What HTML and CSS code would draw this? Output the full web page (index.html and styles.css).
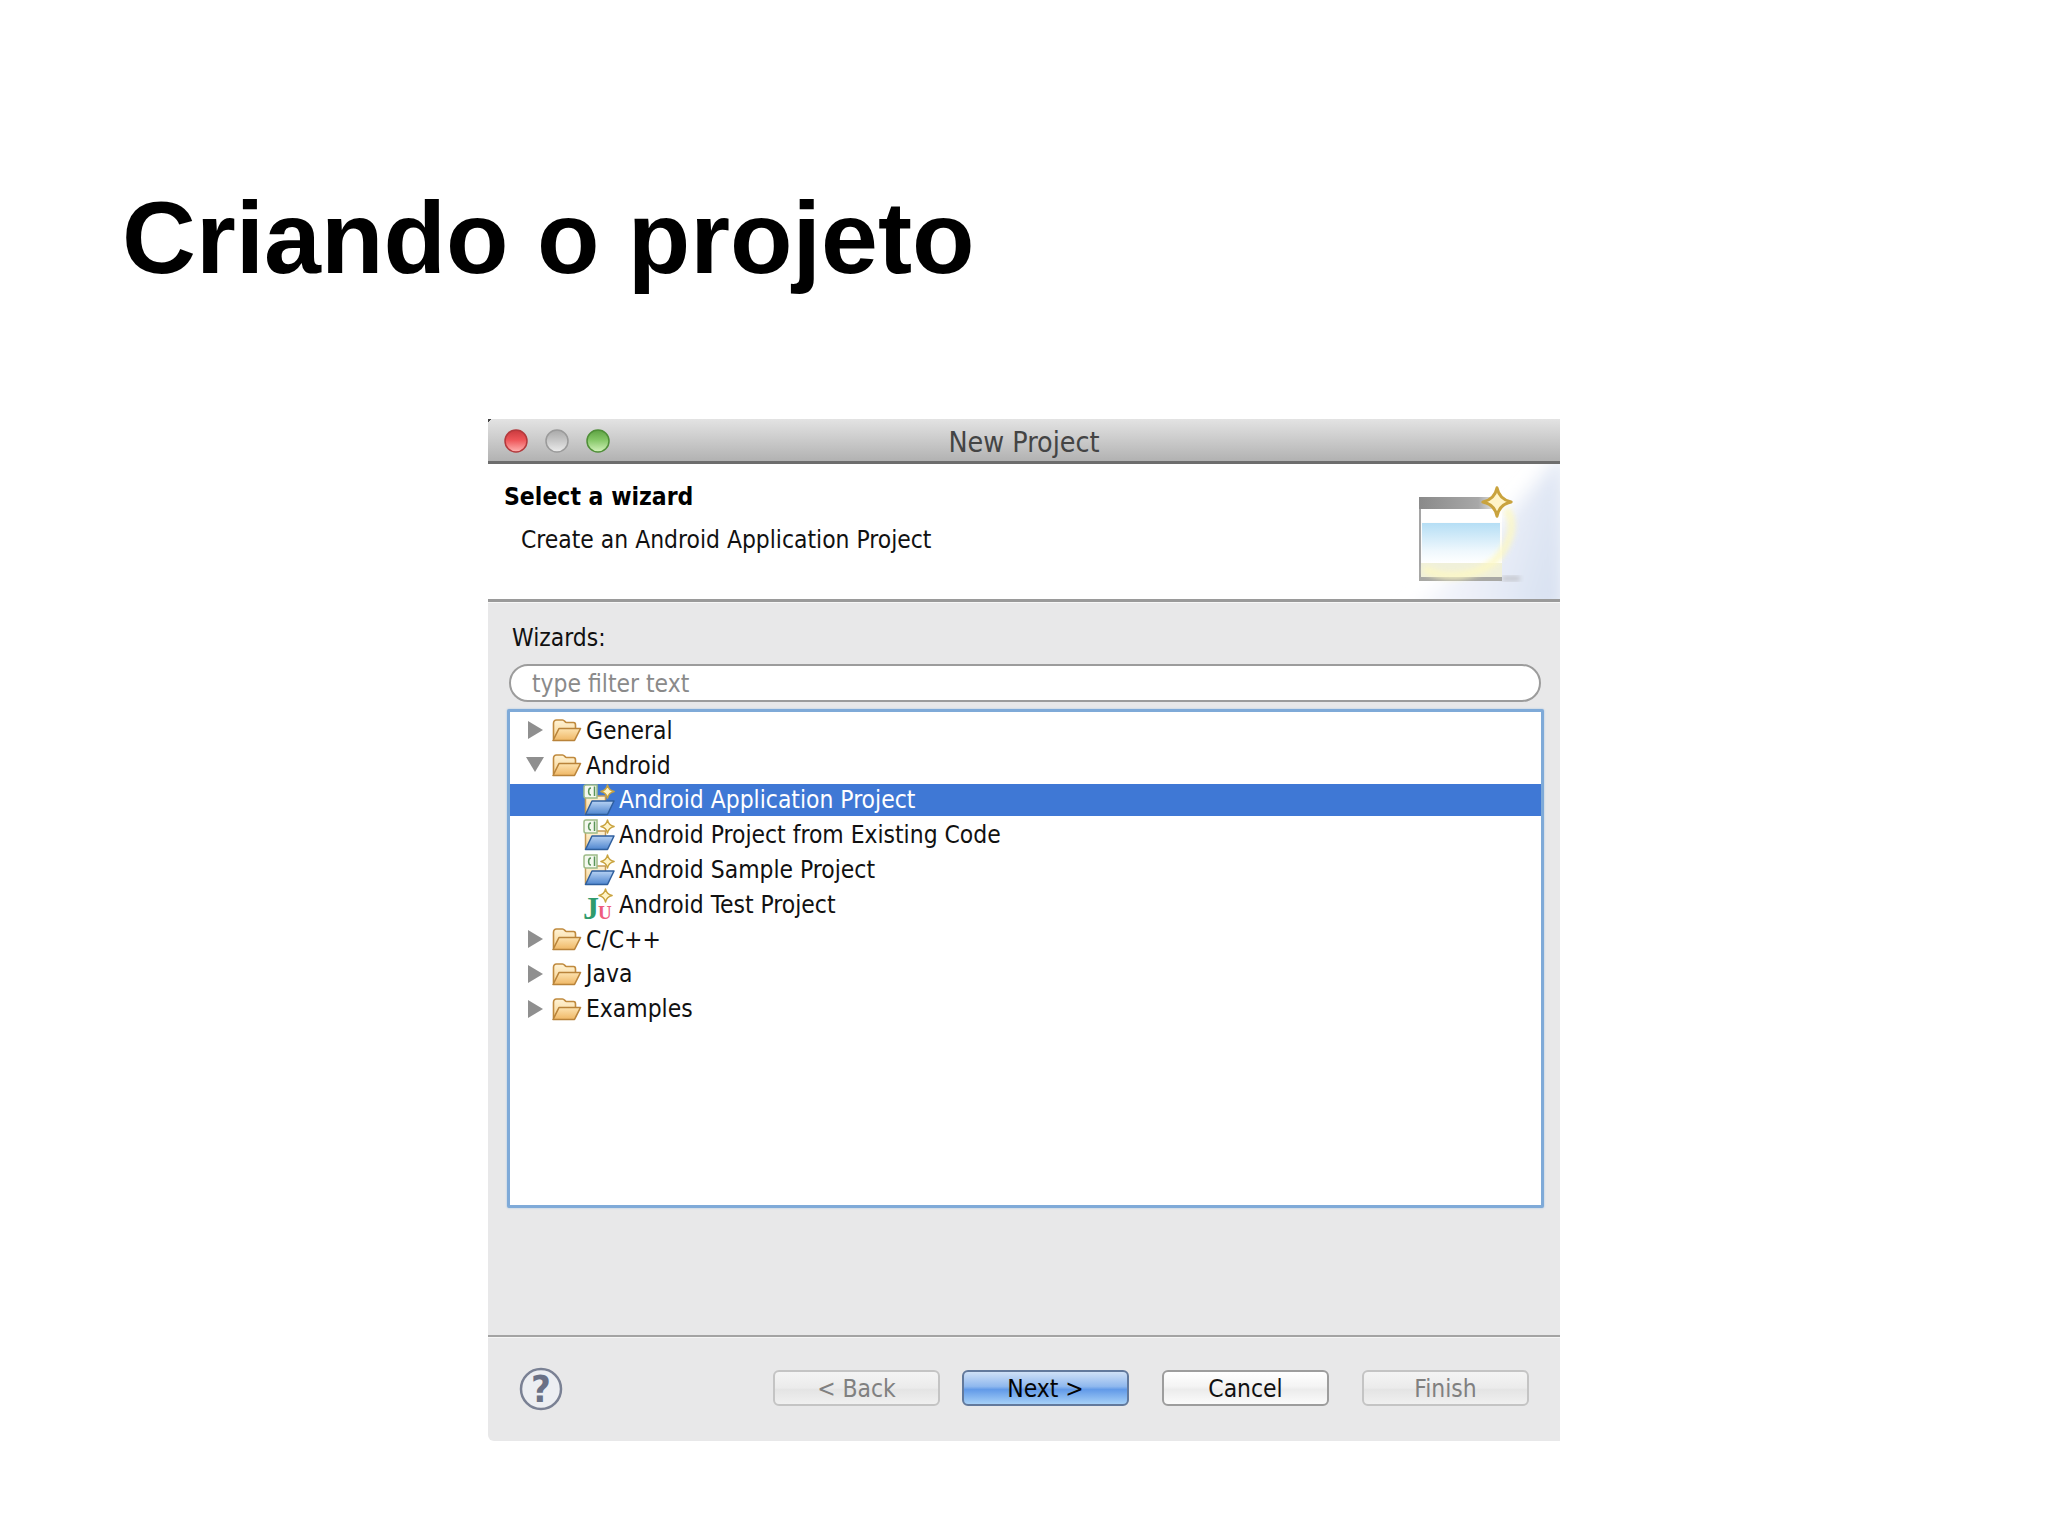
FILE: index.html
```html
<!DOCTYPE html>
<html lang="pt">
<head>
<meta charset="utf-8">
<title>Criando o projeto</title>
<link rel="stylesheet" href="styles.css">
</head>
<body>
<svg class="defs" width="0" height="0" aria-hidden="true">
  <defs>
    <linearGradient id="fold-back" x1="0" y1="0" x2="0" y2="1"><stop offset="0" stop-color="#fff3d6"/><stop offset="1" stop-color="#f7d28e"/></linearGradient>
    <linearGradient id="fold-front" x1="0" y1="0" x2="0" y2="1"><stop offset="0" stop-color="#fde3b0"/><stop offset="1" stop-color="#efb765"/></linearGradient>
    <linearGradient id="fold-blue" x1="0" y1="0" x2="0" y2="1"><stop offset="0" stop-color="#b7d2f3"/><stop offset="1" stop-color="#4f86cf"/></linearGradient>
    <linearGradient id="art-win" x1="0" y1="0" x2="0" y2="1"><stop offset="0" stop-color="#b5def5"/><stop offset="0.7" stop-color="#eff8fd"/><stop offset="1" stop-color="#ffffff"/></linearGradient>
    <linearGradient id="art-bar" x1="0" y1="0" x2="1" y2="0"><stop offset="0" stop-color="#8a8a8a"/><stop offset="0.75" stop-color="#a8a8a8"/><stop offset="1" stop-color="#eeeeee"/></linearGradient>
    <linearGradient id="art-bg" x1="0" y1="0.3" x2="1" y2="0.6"><stop offset="0" stop-color="#ffffff"/><stop offset="0.5" stop-color="#eef1f9"/><stop offset="1" stop-color="#d8e1f1"/></linearGradient>
    <filter id="soft" x="-30%" y="-30%" width="160%" height="160%"><feGaussianBlur stdDeviation="9"/></filter>
    <filter id="glow" x="-20%" y="-20%" width="140%" height="140%"><feGaussianBlur stdDeviation="2.500"/></filter>
    <linearGradient id="red" x1="0" y1="0" x2="0" y2="1"><stop offset="0" stop-color="#c93a3e"/><stop offset="0.45" stop-color="#ee5558"/><stop offset="1" stop-color="#ffb4b2"/></linearGradient>
    <linearGradient id="grey" x1="0" y1="0" x2="0" y2="1"><stop offset="0" stop-color="#a9a9a9"/><stop offset="0.45" stop-color="#c5c5c5"/><stop offset="1" stop-color="#ececec"/></linearGradient>
    <linearGradient id="green" x1="0" y1="0" x2="0" y2="1"><stop offset="0" stop-color="#5ea243"/><stop offset="0.45" stop-color="#85c767"/><stop offset="1" stop-color="#d3f3bc"/></linearGradient>
    <symbol id="folder" viewBox="0 0 30 24">
      <path d="M2 21V5.500C2 3.500 3 2 5 2h6c2 0 2.500 2.500 4 2.500h7c1.500 0 2 1 2 2.500V10" fill="url(#fold-back)" stroke="#c08a3e" stroke-width="1.600"/>
      <path d="M1.500 22.500 7.500 10.500H29L23 22.500Z" fill="url(#fold-front)" stroke="#b9833a" stroke-width="1.600" stroke-linejoin="round"/>
    </symbol>
    <symbol id="spark" viewBox="0 0 14 14">
      <path d="M7 .8C7.700 4.300 9.700 6.300 13.200 7 9.700 7.700 7.700 9.700 7 13.200 6.300 9.700 4.300 7.700 .8 7 4.300 6.300 6.300 4.300 7 .8Z" fill="#fff4c8" stroke="#c9a33e" stroke-width="1.300" stroke-linejoin="round"/>
    </symbol>
    <symbol id="project" viewBox="0 0 32 32">
      <path d="M2.500 30.500V12h20v6" fill="url(#fold-back)" stroke="#c59a55" stroke-width="1.500"/>
      <path d="M3 1h11v13H3C1.800 14 1 13.200 1 12V3C1 1.800 1.800 1 3 1Z" fill="#f4f8ef" stroke="#9dbb88" stroke-width="1.500"/>
      <path d="M8 4C4.800 4 4.800 11 8 11M11.500 2.500V12" fill="none" stroke="#5a9458" stroke-width="1.500"/>
      <path d="M2.500 30.500 9 17H31L24.500 30.500Z" fill="url(#fold-blue)" stroke="#2f5f9e" stroke-width="1.500" stroke-linejoin="round"/>
      <use href="#spark" x="17" y="0" width="15" height="15"/>
    </symbol>
  </defs>
</svg>

<main class="slide">
  <h1 class="slide-title">Criando o projeto</h1>

  <section class="dialog">
    <header class="titlebar">
      <div class="lights">
        <svg class="light" viewBox="0 0 24 24"><circle cx="12" cy="12" r="11" fill="url(#red)" stroke="#b3393c" stroke-width="1.500"/></svg>
        <svg class="light" viewBox="0 0 24 24"><circle cx="12" cy="12" r="11" fill="url(#grey)" stroke="#9a9a9a" stroke-width="1.500"/></svg>
        <svg class="light" viewBox="0 0 24 24"><circle cx="12" cy="12" r="11" fill="url(#green)" stroke="#4f8f38" stroke-width="1.500"/></svg>
      </div>
      <span class="window-title">New Project</span>
    </header>

    <div class="banner">
      <div class="banner-text">
        <h2 class="banner-heading">Select a wizard</h2>
        <p class="banner-desc">Create an Android Application Project</p>
      </div>
      <svg class="banner-art" viewBox="0 0 190 135" aria-hidden="true">
        <path d="M195 -15V150H35C95 105 135 55 195 -15Z" fill="url(#art-bg)" filter="url(#soft)"/>
        <rect x="132" y="112" width="18" height="5" fill="#c2c4ca" filter="url(#glow)"/>
        <rect x="49" y="33" width="83" height="84" fill="#fdfdfd"/>
        <rect x="49" y="33" width="79" height="12" fill="url(#art-bar)"/>
        <rect x="50" y="45" width="82" height="13" fill="#ffffff"/>
        <rect x="52" y="59" width="78" height="40" fill="url(#art-win)"/>
        <rect x="49" y="99" width="83" height="15" fill="#f0f0da"/>
        <rect x="49" y="45" width="2" height="69" fill="#a5a5a5"/>
        <rect x="49" y="113" width="83" height="4" fill="#a8a8a4"/>
        <path d="M54 105C80 118 118 112 134 85 143 70 144 55 136 45" fill="none" stroke="#fdf8c4" stroke-width="8" opacity=".8" filter="url(#glow)"/>
        <use href="#spark" x="111" y="22" width="32" height="32"/>
      </svg>
    </div>

    <div class="content">
      <label class="wizards-label">Wizards:</label>
      <div class="filter">type filter text</div>
      <div class="tree">
        <div class="row">
          <svg class="twist" viewBox="0 0 18 18"><path d="M2 0 17 9 2 18Z"/></svg>
          <svg class="folder"><use href="#folder"/></svg>
          <span>General</span>
        </div>
        <div class="row">
          <svg class="twist" viewBox="0 0 18 18"><path d="M0 1H18L9 16Z"/></svg>
          <svg class="folder"><use href="#folder"/></svg>
          <span>Android</span>
        </div>
        <div class="row child selected">
          <svg class="proj"><use href="#project"/></svg>
          <span>Android Application Project</span>
        </div>
        <div class="row child">
          <svg class="proj"><use href="#project"/></svg>
          <span>Android Project from Existing Code</span>
        </div>
        <div class="row child">
          <svg class="proj"><use href="#project"/></svg>
          <span>Android Sample Project</span>
        </div>
        <div class="row child">
          <svg class="proj" viewBox="0 0 32 32">
            <text class="ju-j" x="0" y="31">J</text>
            <text class="ju-u" x="15" y="31">U</text>
            <use href="#spark" x="15" y="0" width="15" height="15"/>
          </svg>
          <span>Android Test Project</span>
        </div>
        <div class="row">
          <svg class="twist" viewBox="0 0 18 18"><path d="M2 0 17 9 2 18Z"/></svg>
          <svg class="folder"><use href="#folder"/></svg>
          <span>C/C++</span>
        </div>
        <div class="row">
          <svg class="twist" viewBox="0 0 18 18"><path d="M2 0 17 9 2 18Z"/></svg>
          <svg class="folder"><use href="#folder"/></svg>
          <span>Java</span>
        </div>
        <div class="row">
          <svg class="twist" viewBox="0 0 18 18"><path d="M2 0 17 9 2 18Z"/></svg>
          <svg class="folder"><use href="#folder"/></svg>
          <span>Examples</span>
        </div>
      </div>
    </div>

    <footer class="footer">
      <svg class="help" viewBox="0 0 44 44" aria-hidden="true">
        <circle cx="22" cy="22" r="20" fill="#eceef2" stroke="#7a8194" stroke-width="2.500"/>
        <text class="help-mark" x="22" y="35">?</text>
      </svg>
      <div class="buttons">
        <button class="btn btn-off btn-back" type="button">&lt; Back</button>
        <button class="btn btn-default" type="button">Next &gt;</button>
        <button class="btn btn-cancel" type="button">Cancel</button>
        <button class="btn btn-off btn-finish" type="button">Finish</button>
      </div>
    </footer>
  </section>
</main>
</body>
</html>
```
FILE: styles.css
```css
* { box-sizing: border-box; }

html, body { margin: 0; background: #fff; }

body {
  width: 2048px;
  height: 1536px;
  overflow: hidden;
  font-family: "DejaVu Sans", "Liberation Sans", sans-serif;
  font-stretch: condensed;
  color: #111;
}

.defs { display: block; height: 0; }

.slide { padding: 177px 0 0 122px; }

.slide-title {
  margin: 0 0 120px;
  height: 122px;
  font: 700 102.300px/122px "Liberation Sans", Arial, sans-serif;
  color: #000;
}

.dialog {
  width: 1072px;
  height: 1022px;
  margin-left: 366px;
  display: flex;
  flex-direction: column;
  background: #e8e8e9;
  border-bottom-left-radius: 6px;
  font-size: 24.400px;
}

.titlebar {
  flex: none;
  height: 45px;
  display: flex;
  align-items: center;
  justify-content: center;
  position: relative;
  background: linear-gradient(#e3e3e3, #b2b2b2);
  border-bottom: 3px solid #6d6d6d;
}

.titlebar::before {
  content: "";
  position: absolute;
  left: 0;
  top: 0;
  width: 4px;
  height: 4px;
  background: linear-gradient(135deg, #444 50%, transparent 50%);
}

.lights {
  position: absolute;
  left: 16px;
  top: 10px;
  display: flex;
  gap: 17px;
}

.light { width: 24px; height: 24px; display: block; }

.window-title { font-size: 28.400px; color: #444; padding-top: 5px; }

.banner {
  flex: none;
  height: 138px;
  display: flex;
  justify-content: space-between;
  background: #fff;
  border-bottom: 3px solid #9a9a9a;
  box-shadow: 0 1px 0 #f7f7f7;
}

.banner-text { padding: 18px 0 0 16px; }

.banner-heading {
  margin: 0;
  font-size: 24.500px;
  line-height: 30px;
  font-weight: 700;
  color: #000;
}

.banner-desc {
  margin: 13px 0 0 17px;
  line-height: 30px;
  color: #111;
}

.banner-art { width: 190px; height: 135px; display: block; overflow: hidden; }

.content {
  flex: 1;
  padding: 21px 16px 0 19px;
}

.wizards-label {
  display: block;
  margin-left: 5px;
  height: 30px;
  line-height: 30px;
  color: #111;
}

.filter {
  height: 38px;
  margin: 11px 3px 0 2px;
  padding-left: 21px;
  line-height: 36px;
  background: #fff;
  border: 2px solid #9c9c9c;
  border-radius: 19px;
  color: #8a8a8a;
}

.tree {
  height: 499px;
  margin-top: 7px;
  padding-top: 1px;
  background: #fff;
  border: 3px solid #7faad8;
  border-radius: 2px;
  box-shadow: 0 0 2px #9fc0e0;
}

.row {
  height: 34.800px;
  display: flex;
  align-items: center;
  padding-left: 16px;
  color: #111;
}

.twist {
  width: 18px;
  height: 18px;
  margin-right: 7px;
  fill: #8f8f8f;
  flex: none;
}

.folder { width: 31px; height: 24px; margin-right: 4px; flex: none; }

.child { padding-left: 73px; }

.proj { width: 32px; height: 32px; margin-right: 4px; flex: none; overflow: visible; }

.selected { height: 32px; margin: 1.400px 0; background: #3f78d5; color: #fff; }

.ju-j { font: 700 32px "Liberation Serif", serif; fill: #2f9b6d; }
.ju-u { font: 700 19px "Liberation Serif", serif; fill: #ee5c7e; }

.footer {
  flex: none;
  height: 106px;
  margin-top: auto;
  display: flex;
  align-items: center;
  justify-content: space-between;
  padding: 0 31px 0 31px;
  border-top: 2px solid #a3a3a3;
  box-shadow: inset 0 1px 0 #f5f5f5;
}

.help { width: 44px; height: 44px; display: block; }

.help-mark {
  font: 700 condensed 38px "DejaVu Sans", sans-serif;
  text-anchor: middle;
  fill: #6a7186;
}

.buttons { display: flex; gap: 33px; margin-top: -2px; }

.btn {
  height: 36px;
  width: 167px;
  padding: 0;
  font: inherit;
  font-stretch: condensed;
  border-radius: 6px;
  border: 2px solid #9d9d9d;
  background: linear-gradient(#ffffff, #f4f4f4 45%, #ececec 55%, #fbfbfb);
  color: #111;
}

.btn-off {
  background: linear-gradient(#f4f4f4, #ebebeb 50%, #e4e4e4 55%, #f0f0f0);
  border-color: #c4c4c4;
  color: #808080;
}

.btn-back { margin-right: -11px; }

.btn-default {
  background: linear-gradient(#cfe0f6, #8fb8ee 45%, #629ae8 55%, #a6d0f7);
  border-color: #62799c;
  color: #050505;
}
```
